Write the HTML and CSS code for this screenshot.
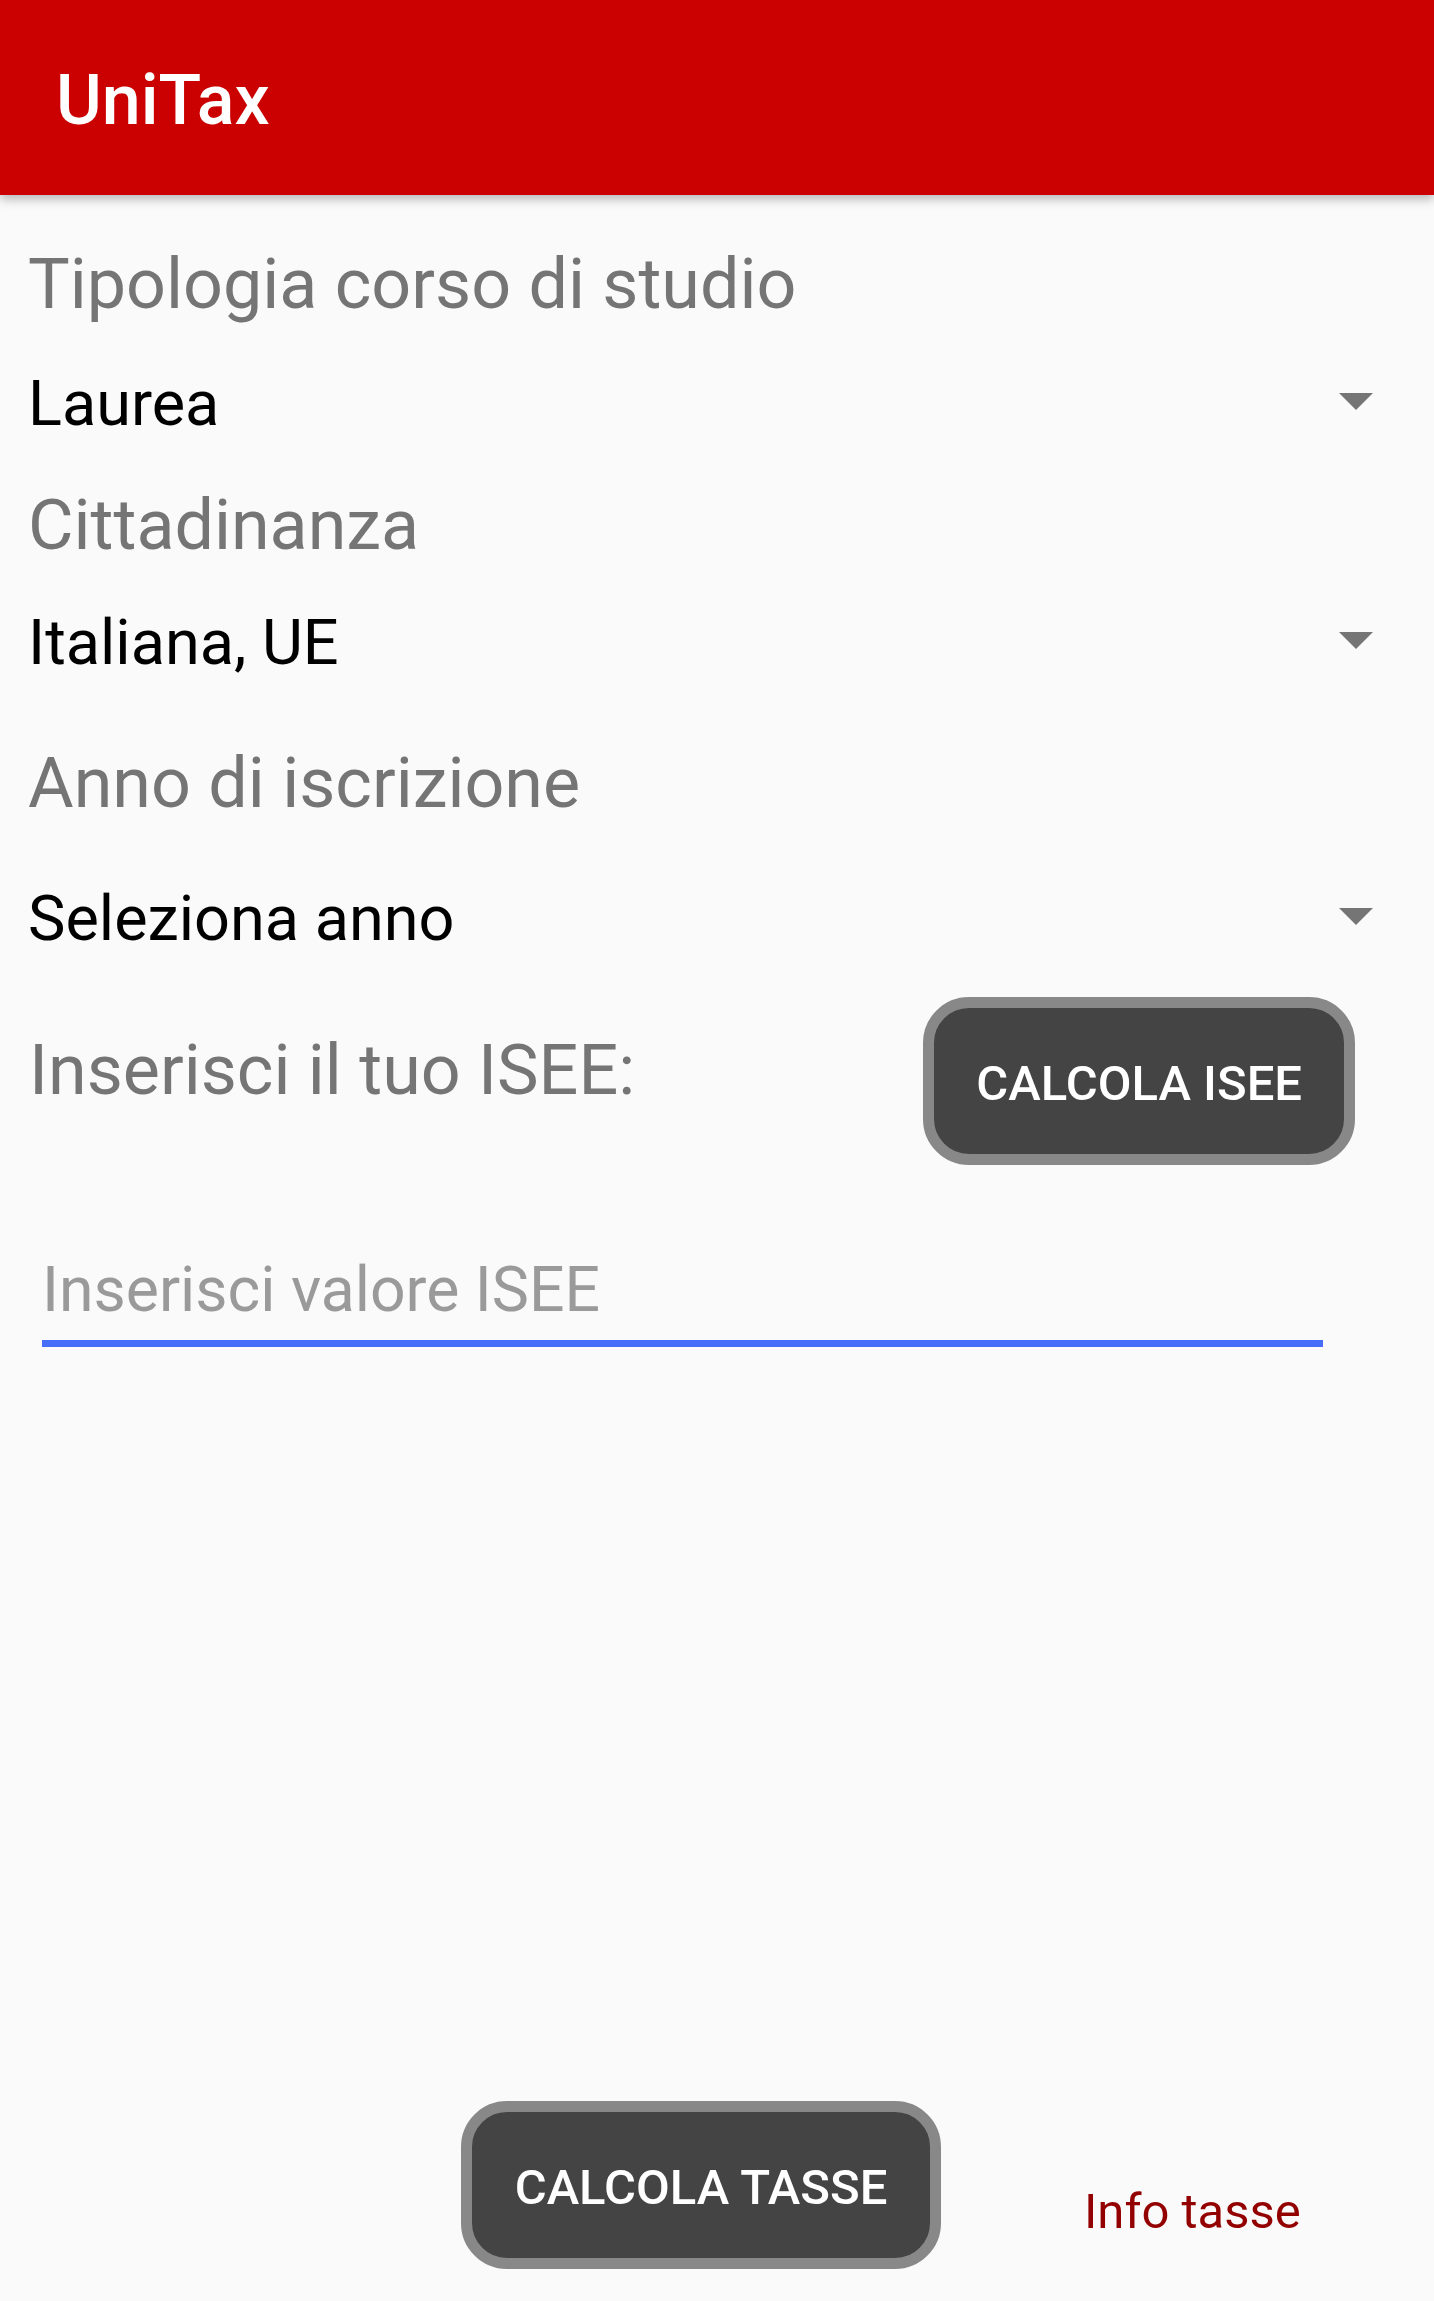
FILE: index.html
```html
<!DOCTYPE html>
<html lang="it">
<head>
<meta charset="utf-8">
<title>UniTax</title>
<link rel="stylesheet" href="styles.css">
</head>
<body>
<div class="app">
  <header class="toolbar"><span class="title">UniTax</span></header>
  <main class="form">
    <div class="label label-first">Tipologia corso di studio</div>
    <div class="spinner sp1"><span class="value">Laurea</span><span class="arrow"></span></div>
    <div class="label label-2">Cittadinanza</div>
    <div class="spinner sp2"><span class="value">Italiana, UE</span><span class="arrow"></span></div>
    <div class="label label-3">Anno di iscrizione</div>
    <div class="spinner sp3"><span class="value">Seleziona anno</span><span class="arrow"></span></div>
    <div class="isee-row">
      <div class="label isee-label">Inserisci il tuo ISEE:</div>
      <button class="btn">CALCOLA ISEE</button>
    </div>
    <div class="input-wrap">
      <span class="placeholder">Inserisci valore ISEE</span>
    </div>
  </main>
  <footer class="bottom">
    <button class="btn btn-tasse">CALCOLA TASSE</button>
    <span class="info">Info tasse</span>
  </footer>
</div>
</body>
</html>
```
FILE: styles.css
```css
html, body {
  margin: 0;
  padding: 0;
  background: #fafafa;
}
body {
  font-family: Roboto, "Noto Sans", "Liberation Sans", sans-serif;
}
.app {
  min-height: 2301px;
  display: flex;
  flex-direction: column;
}
.toolbar {
  height: 195px;
  background: #cb0000;
  box-shadow: 0 4px 10px rgba(0, 0, 0, 0.28);
  display: flex;
  align-items: center;
  padding: 5px 0 0 56px;
  box-sizing: border-box;
  position: relative;
  z-index: 1;
}
.title {
  color: #fff;
  font-size: 70px;
  font-weight: 500;
  line-height: 82px;
}
.form {
  flex: 1;
  display: flex;
  flex-direction: column;
}
.label {
  color: #757575;
  font-size: 70px;
  line-height: 82px;
  padding-left: 28px;
}
.label-first { margin-top: 48px; }
.label-2 { margin-top: 43px; }
.label-3 { margin-top: 62px; }
.spinner {
  display: flex;
  align-items: center;
  justify-content: space-between;
  padding: 0 61px 0 28px;
  height: 74px;
}
.sp1 { margin-top: 42px; }
.sp2 { margin-top: 40px; }
.sp3 { margin-top: 58px; }
.value {
  color: #000;
  font-size: 63px;
  line-height: 74px;
}
.arrow {
  width: 0;
  height: 0;
  border-left: 17px solid transparent;
  border-right: 17px solid transparent;
  border-top: 17px solid #757575;
  margin-bottom: 6px;
}
.isee-row {
  display: flex;
  align-items: flex-start;
  justify-content: space-between;
  margin-top: 41px;
  padding-right: 79px;
}
.isee-label {
  margin-top: 32px;
  padding-left: 29px;
}
.btn {
  box-sizing: border-box;
  height: 168px;
  padding: 4px 42px 0;
  border: 11px solid #888888;
  border-radius: 46px;
  background: #444444;
  color: #fff;
  font-family: Roboto, "Noto Sans", "Liberation Sans", sans-serif;
  font-size: 49px;
  font-weight: 500;
  line-height: 57px;
  white-space: nowrap;
}
.input-wrap {
  box-sizing: border-box;
  margin: 88px 0 0 42px;
  width: 1281px;
  padding: 0 0 13px 0;
  border-bottom: 7px solid #476ef8;
}
.placeholder {
  display: block;
  color: #9a9a9a;
  font-size: 62.5px;
  line-height: 74px;
}
.bottom {
  display: flex;
  align-items: flex-end;
  height: 168px;
  margin-bottom: 32px;
  padding-left: 461px;
}
.btn-tasse {
  width: 480px;
}
.info {
  color: #930000;
  font-size: 49px;
  line-height: 57px;
  margin: 0 0 29px 143px;
}
```
